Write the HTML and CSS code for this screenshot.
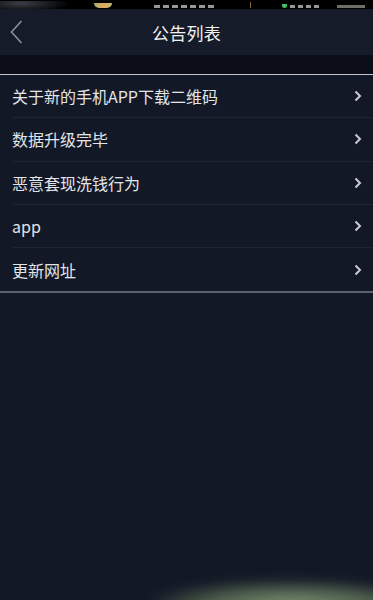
FILE: index.html
```html
<!DOCTYPE html>
<html lang="zh">
<head>
<meta charset="utf-8">
<title>公告列表</title>
<link rel="stylesheet" href="styles.css">
</head>
<body>
<div class="page">
  <div class="statusbar">
    <span class="sb-blur"></span>
    <span class="sb-emoji"></span>
    <span class="sb-time"></span>
    <span class="sb-sig"></span>
    <span class="sb-dot"></span>
    <span class="sb-pct"></span>
    <span class="sb-batt"></span>
  </div>
  <header class="navbar">
    <button class="back" aria-label="返回">
      <svg width="13" height="24" viewBox="0 0 13 24"><path d="M11.5 1 L1.5 12 L11.5 23" fill="none" stroke="#8b8f98" stroke-width="1.6"/></svg>
    </button>
    <h1 class="title">公告列表</h1>
    <span class="nav-spacer"></span>
  </header>
  <div class="gap"></div>
  <ul class="list">
    <li class="item"><span class="label">关于新的手机APP下载二维码</span><svg class="chev" width="8" height="12" viewBox="0 0 8 12"><path d="M1.5 1.5 L6 6 L1.5 10.5" fill="none" stroke="#c9cbd0" stroke-width="2"/></svg></li>
    <li class="item"><span class="label">数据升级完毕</span><svg class="chev" width="8" height="12" viewBox="0 0 8 12"><path d="M1.5 1.5 L6 6 L1.5 10.5" fill="none" stroke="#c9cbd0" stroke-width="2"/></svg></li>
    <li class="item"><span class="label">恶意套现洗钱行为</span><svg class="chev" width="8" height="12" viewBox="0 0 8 12"><path d="M1.5 1.5 L6 6 L1.5 10.5" fill="none" stroke="#c9cbd0" stroke-width="2"/></svg></li>
    <li class="item"><span class="label">app</span><svg class="chev" width="8" height="12" viewBox="0 0 8 12"><path d="M1.5 1.5 L6 6 L1.5 10.5" fill="none" stroke="#c9cbd0" stroke-width="2"/></svg></li>
    <li class="item"><span class="label">更新网址</span><svg class="chev" width="8" height="12" viewBox="0 0 8 12"><path d="M1.5 1.5 L6 6 L1.5 10.5" fill="none" stroke="#c9cbd0" stroke-width="2"/></svg></li>
  </ul>
  <div class="glow"></div>
</div>
</body>
</html>
```

FILE: styles.css
```css
* { box-sizing: border-box; }
html, body {
  margin: 0;
  padding: 0;
  background: #131826;
  font-family: "Noto Sans CJK SC", "Noto Sans", sans-serif;
}
.page {
  position: relative;
  width: 373px;
  height: 600px;
  overflow: hidden;
  background: #131826;
}
.statusbar {
  position: relative;
  height: 9px;
  background: #000;
  overflow: hidden;
}
.statusbar span { position: absolute; bottom: 1px; }
.sb-blur {
  left: 0; bottom: -4px !important; width: 70px; height: 12px;
  background: radial-gradient(ellipse at 30% 20%, #3a3f48, rgba(0,0,0,0) 70%);
}
.sb-emoji {
  left: 94px; width: 18px; height: 5px; border-radius: 0 0 9px 9px;
  background: linear-gradient(90deg, #a4b46a, #e0a860, #b8c070);
}
.sb-time {
  left: 154px; width: 60px; height: 3px;
  background: repeating-linear-gradient(90deg, #d8d8d8 0 6px, transparent 6px 9px);
  opacity: .7;
}
.sb-sig { left: 250px; width: 1px; height: 6px; background: #886a30; }
.sb-dot { left: 282px; width: 5px; height: 4px; border-radius: 0 0 3px 3px; background: #3fbf66; }
.sb-pct {
  left: 290px; width: 30px; height: 3px;
  background: repeating-linear-gradient(90deg, #d8d8d8 0 5px, transparent 5px 8px);
  opacity: .7;
}
.sb-batt { left: 337px; width: 28px; height: 3px; background: #6f6f6a; }
.navbar {
  height: 47px;
  background: #161b29;
  display: flex;
  align-items: center;
  justify-content: space-between;
  padding: 0 10px;
  border-bottom: 1px solid #0c0f18;
}
.back {
  background: none; border: 0; padding: 0; margin: 0;
  width: 40px; display: flex; align-items: center;
  cursor: pointer;
}
.title {
  margin: 0;
  font-size: 17px;
  font-weight: 400;
  color: #f2f2f2;
  letter-spacing: 0.2px;
}
.nav-spacer { width: 40px; }
.gap {
  height: 19px;
  background: #0b0e19;
  border-bottom: 1px solid #c3c6cc;
}
.list {
  list-style: none;
  margin: 0;
  padding: 0 0 0 12px;
  border-bottom: 2px solid #5c606a;
}
.item {
  height: 43.3px;
  display: flex;
  align-items: center;
  justify-content: space-between;
  padding-right: 11px;
  border-bottom: 1px solid #1f2434;
}
.item:last-child { border-bottom: 0; }
.label {
  font-size: 16px;
  color: #e4e5e8;
}
.chev { display: block; }
.glow {
  position: absolute;
  left: 150px;
  bottom: -22px;
  width: 260px;
  height: 42px;
  border-radius: 50%;
  background: radial-gradient(ellipse at 55% 60%, #7c9478 0%, #52634f 40%, rgba(19,24,38,0) 75%);
  filter: blur(6px);
}
```
